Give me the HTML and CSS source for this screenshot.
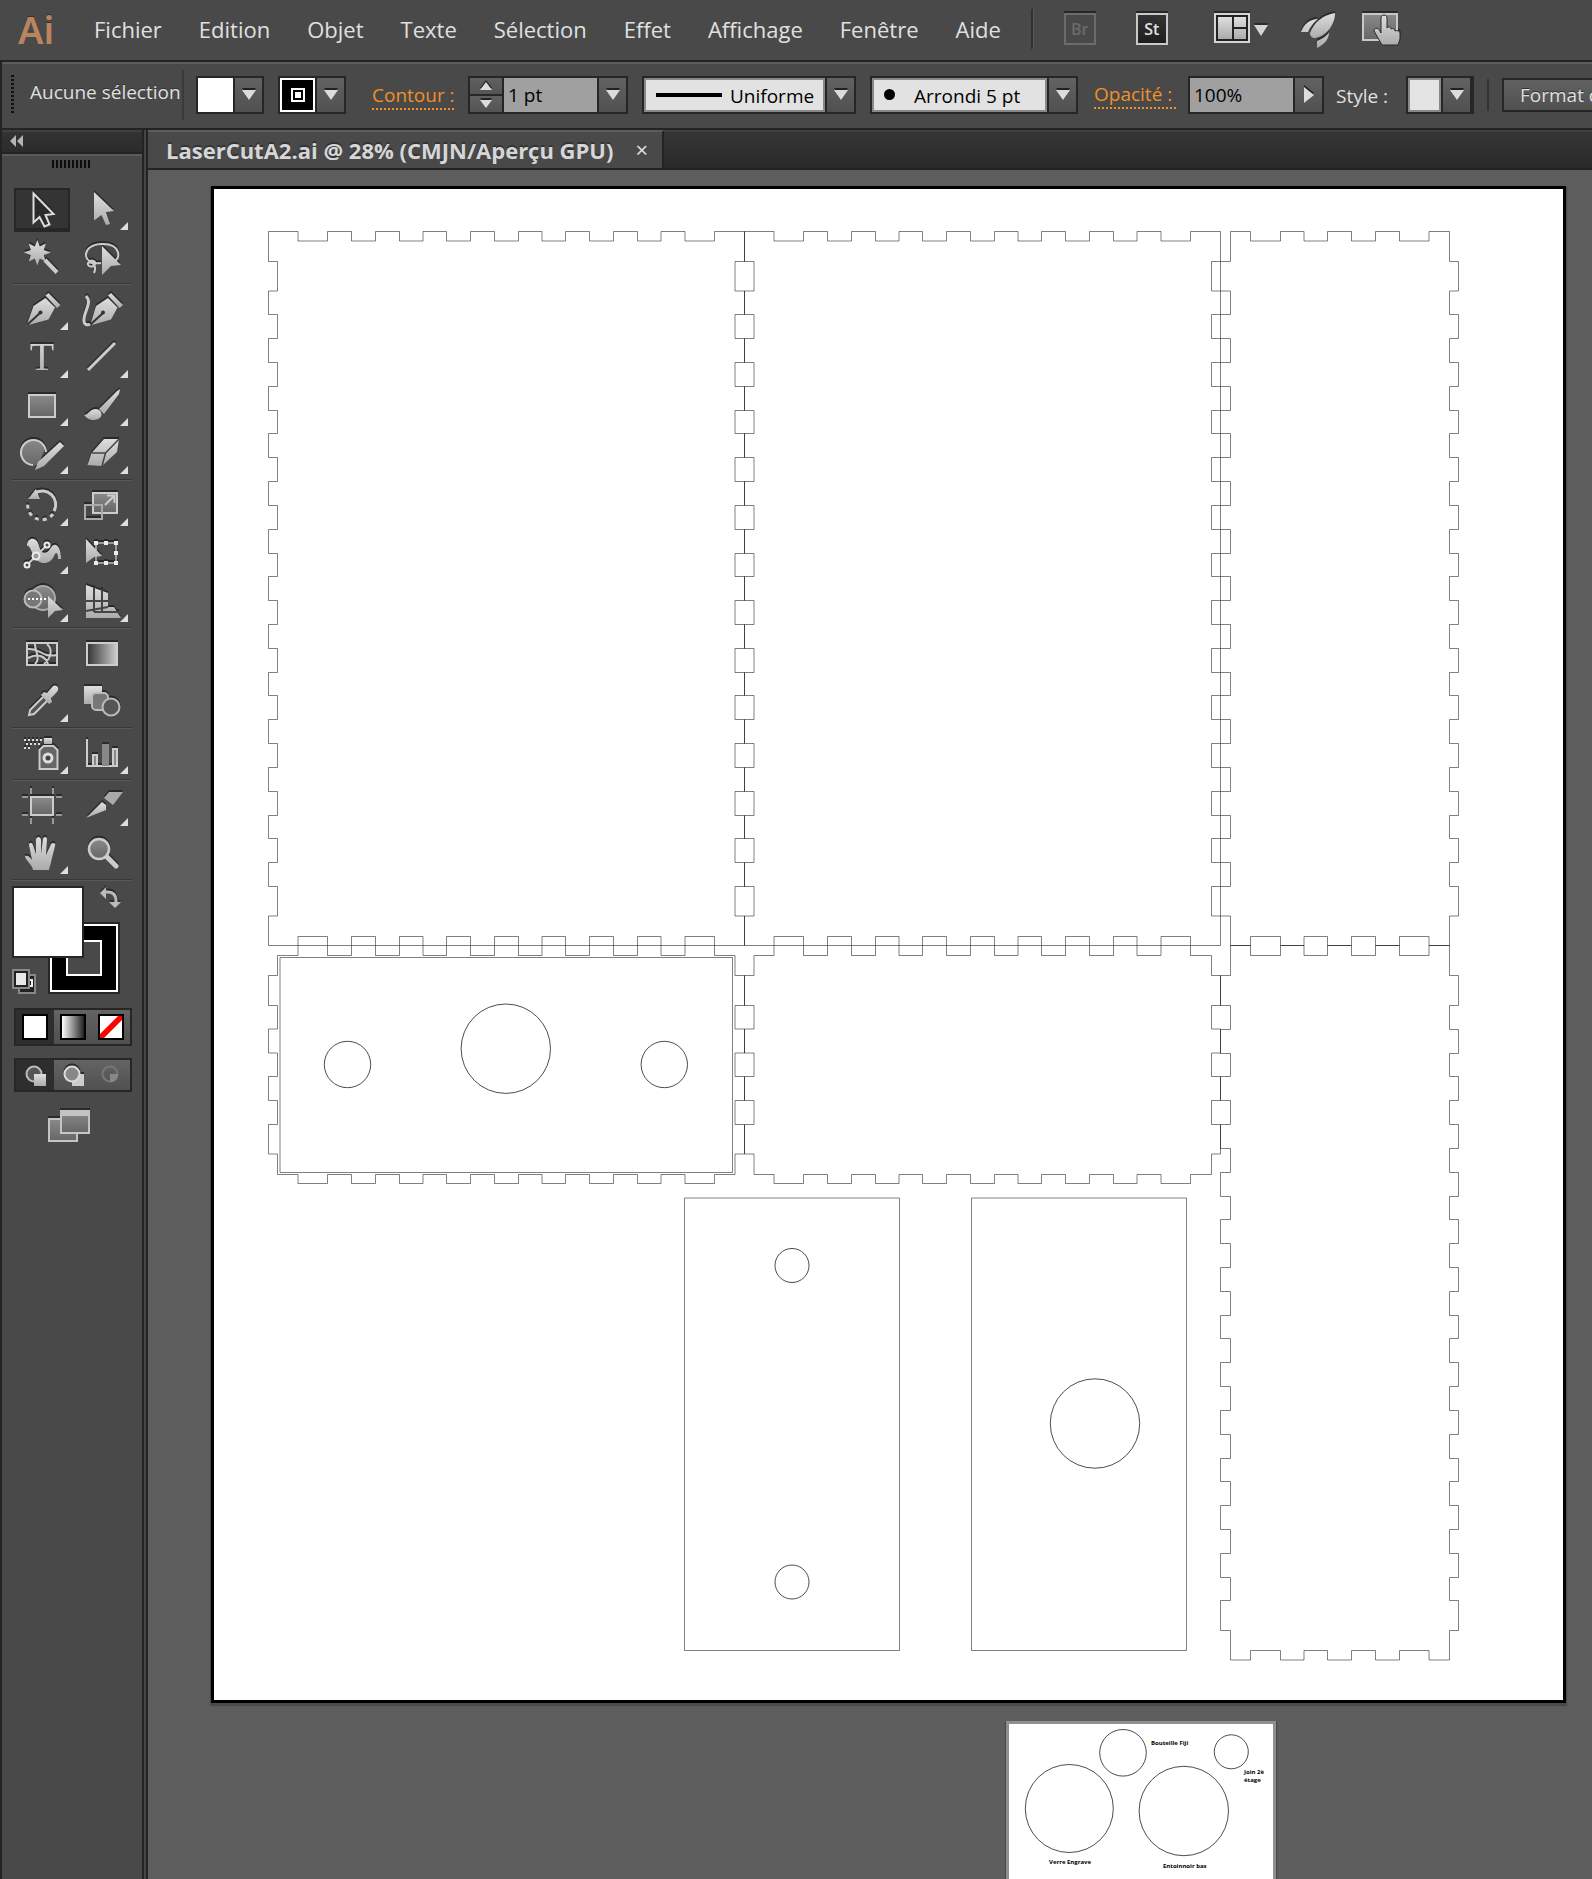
FILE: index.html
```html
<!DOCTYPE html>
<html lang="fr">
<head>
<meta charset="utf-8">
<meta name="viewport" content="width=device-width, initial-scale=1">
<title>LaserCutA2.ai</title>
<link rel="stylesheet" href="styles.css">
</head>
<body>
<svg class="defs" aria-hidden="true">
  <defs>
    <linearGradient id="metal" x1="0" y1="0" x2="0" y2="1"><stop offset="0" stop-color="#dedede"/><stop offset="1" stop-color="#ababab"/></linearGradient>
    <linearGradient id="dim" x1="0" y1="0" x2="0" y2="1"><stop offset="0" stop-color="#8a8a8a"/><stop offset="1" stop-color="#666"/></linearGradient>
    <linearGradient id="fade" x1="0" y1="0" x2="1" y2="0"><stop offset="0" stop-color="#333"/><stop offset="1" stop-color="#ccc"/></linearGradient>
    <linearGradient id="fade-out" x1="0" y1="0" x2="1" y2="0"><stop offset="0" stop-color="#fff"/><stop offset="1" stop-color="#222"/></linearGradient>
  </defs>
</svg>
<div class="app">
  <header class="menubar">
    <span class="logo">Ai</span>
    <nav class="menus">
      <button>Fichier</button><button>Edition</button><button>Objet</button><button>Texte</button><button>Sélection</button><button>Effet</button><button>Affichage</button><button>Fenêtre</button><button>Aide</button>
    </nav>
    <div class="apps">
      <button class="badge off">Br</button>
      <button class="badge">St</button>
      <button class="workspace-btn" aria-label="Réorganiser les documents">
        <svg class="ico" width="58" height="36" viewBox="0 0 58 36"><rect x="1" y="3" width="34" height="28" fill="#222" stroke="#d4d4d4" stroke-width="2"/><path d="M4 6h14v22H4zM20 6h12v10H20zM20 18h12v10H20z" fill="url(#metal)"/><path d="M40 14h14l-7 11z" fill="#d4d4d4"/></svg>
      </button>
      <button class="rocket" aria-label="Performances GPU">
        <svg class="ico" width="36" height="38" viewBox="0 0 36 38"><g fill="url(#metal)"><path d="M34 3C22 5 13 12 9 23c0 3 2 5 5 5C26 26 34 14 34 3z"/><path d="M17 9C9 9 3 14 0 22h7c2-5 5-9 10-13zM28 22c-2 4-6 6-12 9v7c8-4 12-9 12-16z"/></g></svg>
      </button>
      <button class="touch" aria-label="Espace de travail tactile">
        <svg class="ico" width="40" height="38" viewBox="0 0 40 38"><rect x="1" y="4" width="34" height="26" fill="url(#dim)" stroke="#c8c8c8" stroke-width="2"/><path d="M19 8c0-4 6-4 6 0v10c2-2 4-1 4 1 2-1 4 0 4 2 2-1 5 0 5 2v6l-2 6H20l-8-14c0-3 4-4 6 0l1 2z" fill="url(#metal)" stroke="#2b2b2b" stroke-width="1"/></svg>
      </button>
    </div>
  </header>

  <section class="control" aria-label="Contrôle">
    <span class="grip-v"></span>
    <span class="state">Aucune sélection</span>
    <button class="swatch fill-sw" aria-label="Fond"><i class="chip white"></i><i class="drop"></i></button>
    <button class="swatch stroke-sw" aria-label="Contour"><i class="chip ring"></i><i class="drop"></i></button>
    <label class="link contour" for="weight">Contour :</label>
    <span class="field weight">
      <span class="spin"><button class="up" aria-label="Augmenter"></button><button class="down" aria-label="Diminuer"></button></span>
      <input id="weight" type="text" value="1 pt">
      <button class="drop" aria-label="Épaisseurs"></button>
    </span>
    <span class="field profile">
      <select aria-label="Profil"><option>Uniforme</option></select><i class="stroke-line"></i><i class="drop"></i>
    </span>
    <span class="field brush">
      <select aria-label="Forme"><option>Arrondi 5 pt</option></select><i class="dot"></i><i class="drop"></i>
    </span>
    <label class="link opacite" for="opacity">Opacité :</label>
    <span class="field opacity"><input id="opacity" type="text" value="100%"><button class="drop right" aria-label="Régler l’opacité"></button></span>
    <span class="style-label">Style :</span>
    <button class="swatch style-sw" aria-label="Style"><i class="chip pale"></i><i class="drop"></i></button>
    <button class="format">Format de document</button>
  </section>

  <div class="main">
    <aside class="tools" aria-label="Outils">
      <div class="tools-head"><svg width="16" height="12" viewBox="0 0 16 12"><path d="M6 0v12L0 6zM13 0v12L7 6z" fill="#b5b5b5"/></svg></div>
      <div class="grip-h"></div>

      <div class="grid">
        <button class="tool on" aria-label="Sélection"><svg viewBox="0 0 60 48"><path d="M21.500 8.500L41.500 29l-8 1 4 9.500-5 2-5-9.500-6 5.500z" fill="#2a2a2a" stroke="#ddd" stroke-width="2"/></svg></button>
        <button class="tool more" aria-label="Sélection directe"><svg viewBox="0 0 60 48"><path d="M22 7l20 19-8 1 4 12-4 1-4.500-10-7.500 5.500z"/></svg></button>
        <button class="tool" aria-label="Baguette magique"><svg viewBox="0 0 60 48"><path d="M25.300 7l2.500 6.500 6-3-2 6.500 7 2.500-7 2.500 2 6.500-6-3-2.500 7-2.500-7-6 3 2-6.500-7-2.500 7-2.500-2-6.500 6 3z"/><path class="ln" d="M33 27l12 12.500" stroke-width="4"/></svg></button>
        <button class="tool" aria-label="Lasso"><svg viewBox="0 0 60 48"><path class="ln" d="M29 30C10 33 8 12 29 11c21-1 20 16 12 18M16 31c2-5 8-4 7 0s-8 3-7-1c5-2 9 3 6 10" stroke-width="2"/><path d="M30 13l19 19-10 1-9 9z"/></svg></button>
      </div>
      <hr>
      <div class="grid">
        <button class="tool more" aria-label="Plume"><svg viewBox="0 0 60 48"><path d="M14.500 40.500l7-19.500 12-8 9.500 9.500-6.500 12z"/><path d="M36.500 8l12 12-3.500 3-11.500-12.500z"/><path d="M15 40l13-12" stroke="#333" stroke-width="2"/><circle cx="28.500" cy="27.500" r="2" fill="#333"/></svg></button>
        <button class="tool" aria-label="Courbure"><svg viewBox="0 0 60 48"><path d="M18 40.500l6-19.500 12-8 9.500 9.500-6.500 12z"/><path d="M39 8l12 12-3.500 3L36 10.500z"/><path d="M18 40l13-12" stroke="#333" stroke-width="2"/><circle cx="31" cy="27.500" r="2" fill="#333"/><path class="ln" d="M14 11c7 7-3 16-2 25 0 3 3 5 6 3"/></svg></button>
        <button class="tool more" aria-label="Texte"><svg viewBox="0 0 60 48"><text x="30" y="37" text-anchor="middle" class="glyph-t">T</text></svg></button>
        <button class="tool more" aria-label="Trait"><svg viewBox="0 0 60 48"><path class="ln" d="M16 37L43 10"/></svg></button>
        <button class="tool more" aria-label="Rectangle"><svg viewBox="0 0 60 48"><rect x="17" y="14" width="26" height="22" class="bx"/></svg></button>
        <button class="tool more" aria-label="Pinceau"><svg viewBox="0 0 60 48"><path d="M48 8l-1 5-15 20-5-5 18-18z"/><path d="M12 34c5 0 5-6 12-6 7 1 7 8 2 10-5 2-10 1-14-4z"/></svg></button>
        <button class="tool more" aria-label="Crayon"><svg viewBox="0 0 60 48"><path d="M27 35a13 13 0 1 1 6-16z" fill="url(#dim)"/><path class="ln" d="M21 36A12.500 12.500 0 1 1 34 23" stroke-width="2"/><path d="M48 13l4 4-20 20-9 4 3-8z"/></svg></button>
        <button class="tool more" aria-label="Gomme"><svg viewBox="0 0 60 48"><path d="M15.500 36l4-12L32 10h15l-2 13-15 14z"/><path d="M19.500 24h14L47 10M33.500 24L30 37" fill="none" stroke="#444" stroke-width="1.500"/></svg></button>
      </div>
      <hr>
      <div class="grid">
        <button class="tool more" aria-label="Rotation"><svg viewBox="0 0 60 48"><path class="ln" d="M23 12a13.500 13.500 0 0 1 19 18"/><path class="ln" d="M41 33a14 14 0 0 1-25-11" stroke-dasharray="4 4"/><path d="M16 18l8-10 4 10z"/></svg></button>
        <button class="tool more" aria-label="Mise à l’échelle"><svg viewBox="0 0 60 48"><rect x="21" y="12" width="24" height="20" class="bx"/><rect x="13" y="24" width="17" height="14" fill="none" stroke="#aaa" stroke-width="2"/><path class="ln" d="M33 24l9-9M35 14.500h7.500V22" stroke-width="2"/></svg></button>
        <button class="tool more" aria-label="Largeur"><svg viewBox="0 0 60 48"><path d="M15 17c0-9 10-10 12 0 2 8 7 9 11 3 4-8 11-5 11 10h-3c0-7-2-8-4-3-4 10-17 9-21-1-3-9-5-10-6-9z"/><path class="ln" d="M15 36l20-20" stroke-width="2"/><g fill="#4a4a4a" stroke="#eee" stroke-width="2"><circle cx="15" cy="36" r="2.500"/><circle cx="35" cy="16" r="2.500"/><circle cx="24" cy="27" r="3.500" fill="#999"/></g></svg></button>
        <button class="tool" aria-label="Transformation manuelle"><svg viewBox="0 0 60 48"><rect x="24" y="14" width="20" height="20" fill="none" stroke="#999" stroke-width="2"/><path d="M22 12h4v4h-4zM32 12h4v4h-4zM42 12h4v4h-4zM42 22h4v4h-4zM42 32h4v4h-4zM32 32h4v4h-4zM22 32h4v4h-4z" fill="#eee"/><path d="M14 10l16 17-8 1-8 6z"/></svg></button>
        <button class="tool more" aria-label="Concepteur de forme"><svg viewBox="0 0 60 48"><circle cx="31" cy="21" r="12" fill="url(#dim)" stroke="#aaa" stroke-width="2"/><circle cx="21" cy="22" r="8.500" fill="#777" stroke="#bbb" stroke-width="2"/><path d="M16 22h20" stroke="#fff" stroke-width="2" stroke-dasharray="2 2"/><path d="M36 19l15 14-8 1-7 7z"/></svg></button>
        <button class="tool more" aria-label="Grille de perspective"><svg viewBox="0 0 60 48"><path d="M14 8l22 8v14h6l7 11H14z"/><path d="M22 10v25M30 12v22M14 24h22M14 34l22-4M22 35h25" stroke="#444" stroke-width="2" fill="none"/></svg></button>
      </div>
      <hr>
      <div class="grid">
        <button class="tool" aria-label="Filet"><svg viewBox="0 0 60 48"><rect x="15" y="14" width="30" height="22" fill="none" stroke="#ccc" stroke-width="2"/><path class="ln" d="M16 20c14-1 12 9 29 6M16 29c12-6 18 0 20 6M23 35c6-6 0-12 0-20M35 15c7 6 3 15-3 20" stroke-width="2"/></svg></button>
        <button class="tool" aria-label="Dégradé"><svg viewBox="0 0 60 48"><rect x="15" y="14" width="30" height="22" fill="url(#fade)" stroke="#ccc" stroke-width="2"/></svg></button>
        <button class="tool more" aria-label="Pipette"><svg viewBox="0 0 60 48"><path d="M31 20L18 33l-1 5 5-1 13-13" fill="#555" stroke="#ccc" stroke-width="2"/><path d="M29 18l3-3 3 1 6-7c4-2 7 2 4 6l-6 6 1 4-3 2z"/></svg></button>
        <button class="tool" aria-label="Dégradé de formes"><svg viewBox="0 0 60 48"><path d="M12 9h18v18H12z"/><rect x="20" y="16" width="16" height="17" rx="4" fill="#777" stroke="#bbb" stroke-width="2"/><circle cx="39" cy="30" r="8.500" fill="#555" stroke="#bbb" stroke-width="2"/></svg></button>
      </div>
      <hr>
      <div class="grid">
        <button class="tool more" aria-label="Pulvérisation"><svg viewBox="0 0 60 48"><path d="M32 9h8v6h-8z"/><path d="M27.500 40V21l4-4h10l4 4v19z" fill="#666" stroke="#ccc" stroke-width="2"/><circle cx="36" cy="29" r="4" fill="#444" stroke="#ddd" stroke-width="3"/><path d="M12 11h20M14 15h16M12 19h8" stroke="#ddd" stroke-width="2" stroke-dasharray="2 2"/></svg></button>
        <button class="tool more" aria-label="Graphique"><svg viewBox="0 0 60 48"><path class="ln" d="M15 10v27h31" stroke-width="2"/><path d="M21 36V26h4v10M41 36V20h4v16" fill="#888" stroke="#ccc" stroke-width="2"/><path d="M31 36V16h5v20z" fill="#888" stroke="#888" stroke-width="2"/></svg></button>
      </div>
      <hr>
      <div class="grid">
        <button class="tool" aria-label="Plan de travail"><svg viewBox="0 0 60 48"><path d="M10 16h6M44 16h6M10 34h6M44 34h6M19 7v6M41 7v6M19 37v6M41 37v6" stroke="#999" stroke-width="2"/><rect x="19" y="16" width="22" height="18" class="bx"/></svg></button>
        <button class="tool more" aria-label="Tranche"><svg viewBox="0 0 60 48"><path d="M14 37l16-16 4 3v5z"/><path d="M32 17l5-6h14L41 24z" fill="#aaa"/></svg></button>
        <button class="tool more" aria-label="Main"><svg viewBox="0 0 60 48"><path d="M21 41c-1-6-8-10-8-14 3-1 5 1 7 4l-3-15c0-3 3-3 4 0l3 9V11c0-4 5-4 5 0v14l2-15c1-3 4-2 4 0l-1 16 5-11c2-2 5-1 4 2l-4 16c0 3-2 5-2 8z"/></svg></button>
        <button class="tool" aria-label="Zoom"><svg viewBox="0 0 60 48"><path class="ln" d="M34 27l10 10" stroke-width="5" stroke-linecap="round"/><circle cx="27" cy="20" r="10" fill="url(#dim)" stroke="#ccc" stroke-width="2.500"/></svg></button>
      </div>
      <hr>
      <div class="colors">
        <svg width="122" height="122" viewBox="12 881 122 122">
          <path d="M48 922h72v72H48z" fill="#262626"/><path d="M50 924h68v68H50z" fill="#fff"/><path d="M52 926h64v64H52z"/><path d="M66 940h36v36H66z" fill="#fff"/><path d="M68 942h32v32H68z" fill="#494949"/>
          <path d="M12 886h72v72H12z" fill="#262626"/><path d="M14 888h68v68H14z" fill="#fff"/>
          <g class="ico"><path d="M103 892h5q8 0 8 9v2" fill="none" stroke="#bbb" stroke-width="3"/><path d="M106 887v12l-6-6zM109 902h12l-6 6z" fill="#bbb"/></g>
          <path d="M19 975h16v18H19z" fill="#222" stroke="#888" stroke-width="2"/><path d="M26 980h6v6h-8" fill="none" stroke="#eee" stroke-width="2"/><path d="M13 970h16v18H13z" fill="#222" stroke="#888" stroke-width="2"/><path d="M16 973h10v12H16z" fill="#e8e8e8"/>
        </svg>
      </div>
      <div class="seg">
        <button class="on" aria-label="Couleur"><svg width="26" height="26"><path d="M0 0h26v26H0z"/><path d="M2 2h22v22H2z" fill="#fff"/></svg></button>
        <button aria-label="Dégradé"><svg width="26" height="26"><path d="M0 0h26v26H0z"/><path d="M2 2h22v22H2z" fill="url(#fade-out)"/></svg></button>
        <button aria-label="Sans"><svg width="26" height="26"><path d="M0 0h26v26H0z"/><path d="M2 2h22v22H2z" fill="#fff"/><path d="M2 24v-4L20 2h4v4L6 24z" fill="#f00"/></svg></button>
      </div>
      <div class="seg modes">
        <button class="on" aria-label="Dessin normal"><svg class="ico" width="22" height="24"><circle cx="9" cy="11" r="7.500" fill="#555" stroke="#bbb" stroke-width="2"/><path d="M9 11h12v12H9z" fill="url(#metal)"/></svg></button>
        <button aria-label="Dessin arrière"><svg class="ico" width="22" height="24"><path d="M9 11h12v12H9z" fill="#ccc"/><circle cx="9" cy="11" r="7.500" fill="#888" stroke="#ddd" stroke-width="2"/></svg></button>
        <button aria-label="Dessin intérieur" disabled><svg width="22" height="24"><circle cx="9" cy="11" r="7.500" fill="none" stroke="#777" stroke-width="2"/><path d="M9 11h8q0 8-8 8z" fill="#888"/></svg></button>
      </div>
      <button class="screen" aria-label="Mode d’affichage"><svg class="ico" width="42" height="35"><path d="M1 11h28v22H1z" fill="url(#dim)" stroke="#c4c4c4" stroke-width="2"/><path d="M13 3h28v22H13z" fill="url(#dim)" stroke="#c4c4c4" stroke-width="2"/><path d="M13 2h28v6H13z" fill="#c4c4c4"/></svg></button>
    </aside>

    <div class="doc">
      <div class="tabs">
        <div class="tab"><span>LaserCutA2.ai @ 28% (CMJN/Aperçu GPU)</span><button aria-label="Fermer">×</button></div>
      </div>
      <div class="canvas">
        <div class="board board-main">
          <svg viewBox="214 189 1349 1511" role="img" aria-label="Plan de découpe laser">
            <path class="cut" id="panels"/>
            <g class="cut">
              <path d="M280 957.500h452.500v215H280zM684.500 1198h215v452.500h-215zM971.500 1198h215v452.500h-215z"/>
              <circle cx="347.500" cy="1064.500" r="23.200"/><circle cx="505.800" cy="1048.700" r="44.700"/><circle cx="664.300" cy="1064.500" r="23.200"/>
              <circle cx="792" cy="1265.500" r="17"/><circle cx="792" cy="1582" r="17"/><circle cx="1095" cy="1423.500" r="44.700"/>
            </g>
          </svg>
        </div>
        <div class="board board-side">
          <svg viewBox="1009 1724 264 155">
            <g class="cut"><circle cx="1123" cy="1752.800" r="23.300"/><circle cx="1231.300" cy="1751.800" r="17"/><circle cx="1069.300" cy="1808.500" r="44"/><circle cx="1183.800" cy="1811" r="44.700"/></g>
            <g class="note"><text x="1151" y="1745">Bouteille Fiji</text><text x="1244" y="1774">Join 2è</text><text x="1244" y="1782">étage</text><text x="1049" y="1864">Verre Engrave</text><text x="1163" y="1868">Entoinnoir bas</text></g>
          </svg>
        </div>
      </div>
    </div>
  </div>
</div>
<script src="script.js"></script>
</body>
</html>
```
FILE: styles.css
```css
* { box-sizing: border-box; }

body {
  margin: 0;
  background: #494949;
  color: #e0e0e0;
  font-family: "Open Sans", "Noto Sans", sans-serif;
  font-size: 19px;
}

button, input, select { font: inherit; color: inherit; border: 0; padding: 0; margin: 0; background: none; border-radius: 0; }
i { font-style: normal; }
.defs { position: absolute; width: 0; height: 0; }
.ico, .tool svg { filter: drop-shadow(0 -2px 0 #2a2a2a); }
.app { display: flex; flex-direction: column; min-height: 100vh; overflow: hidden; }

/* Menu bar */
.menubar { display: flex; align-items: center; height: 60px; padding: 0 0 2px 18px; white-space: nowrap; }
.logo { width: 76px; font-family: "Noto Sans", sans-serif; font-size: 38px; line-height: 52px; font-weight: 600; color: #b9855f; text-shadow: 0 -1px #333; }
.menus { display: flex; gap: 37px; text-shadow: 0 -2px #333; }
.menus button { font-size: 22px; line-height: 32px; }
.apps { display: flex; align-items: center; height: 40px; margin-left: 30px; padding-left: 31px; border-left: 2px solid #303030; box-shadow: inset 1px 0 #5a5a5a; }
.badge { width: 32px; height: 32px; margin-right: 40px; border: 2px solid #c8c8c8; background: linear-gradient(#333, #1e1e1e); font-size: 16px; line-height: 24px; font-weight: 600; box-shadow: 0 -2px #262626; }
.badge.off { border-color: #6b6b6b; background: none; color: #6b6b6b; }
.apps svg { display: block; }
.workspace-btn { margin: 0 29px 0 6px; }
.rocket { margin-right: 25px; }

/* Control bar */
.control { display: flex; align-items: center; height: 70px; padding: 0 0 1px 9px; border: solid #232323; border-width: 2px 0 2px 2px; box-shadow: inset 0 2px #5c5c5c; white-space: nowrap; overflow: hidden; }
.control > * { flex: none; }
.grip-v { width: 3px; height: 40px; background: repeating-linear-gradient(#111 0 2px, #494949 2px 4px); }
.state { width: 154px; height: 50px; margin: 0 12px 0 16px; line-height: 44px; border-right: 2px solid #3a3a3a; text-shadow: 0 -1px #333; }
.swatch, .field { display: flex; position: relative; height: 38px; border: 2px solid #262626; background: #262626; }
.swatch { width: 68px; gap: 2px; margin-right: 14px; }
.chip { width: 35px; height: 34px; }
.white { background: #fff; }
.pale { background: #e4e4e4; border: 2px solid #888; }
.ring { border: 2px solid #fff; background: linear-gradient(#fff, #fff) center / 6px 6px no-repeat, linear-gradient(#000, #000) center / 10px 10px no-repeat, linear-gradient(#fff, #fff) center / 14px 14px no-repeat, #000; }
.drop { display: flex; align-items: center; justify-content: center; width: 27px; height: 34px; background: linear-gradient(#626262, #505050); }
.drop::before, .up::before, .down::before { content: ""; border: 7px solid transparent; border-top: 10px solid #dcdcdc; border-bottom: 0; filter: drop-shadow(0 -2px 0 #222); }
.drop.right::before { border: 8px solid transparent; border-left: 10px solid #dcdcdc; border-right: 0; }
.link { line-height: 26px; color: #ef9029; border-bottom: 2px dotted #ef9029; }
.contour { width: 82px; margin: 2px 14px 0 12px; }
.field { gap: 2px; margin-right: 14px; }
.field input { min-width: 0; flex: 1; padding-left: 4px; background: #a0a0a0; color: #000; }
.spin { display: flex; flex-direction: column; gap: 2px; width: 32px; }
.spin button { display: flex; flex: 1; align-items: center; justify-content: center; background: linear-gradient(#606060, #545454); }
.up::before { border: 6px solid transparent; border-top: 0; border-bottom: 8px solid #dcdcdc; }
.down::before { border-width: 8px 6px 0; }
.weight { width: 160px; }
.profile { width: 214px; }
.brush { width: 208px; }
.field select { flex: 1; appearance: none; padding-top: 2px; border: 2px solid #888; background: #e2e2e2; color: #000; }
.profile select { padding-left: 84px; }
.brush select { padding-left: 40px; }
.stroke-line { position: absolute; left: 12px; top: 15px; width: 66px; height: 4px; background: #000; }
.dot { position: absolute; left: 12px; top: 11px; width: 11px; height: 11px; border-radius: 50%; background: #000; }
.opacite { width: 82px; margin: 0 12px 0 2px; }
.opacity { width: 136px; margin-right: 12px; }
.style-label { width: 56px; margin-right: 14px; padding-top: 2px; }
.style-sw .chip { width: 33px; }
.format { height: 34px; margin-left: 14px; padding: 0 16px; border: 2px solid #262626; background: linear-gradient(#626262, #505050); box-shadow: -14px 0 0 -1px #494949, -16px 0 0 -1px #333; text-shadow: 0 -1px #333; }

/* Tool panel */
.main { display: flex; flex: 1; }
.tools { flex: none; width: 148px; border: solid #232323; border-width: 0 6px 0 2px; border-image: linear-gradient(90deg, #232323 2px, #232323 142px, #232323 144px, #454545 144px, #454545 146px, #232323 146px) 0 6 0 2; }
.tools-head { display: flex; align-items: center; height: 24px; padding-left: 8px; background: linear-gradient(#404040 2px, #333 2px, #2b2b2b); border-bottom: 2px solid #232323; }
.grip-h { height: 31px; border-top: 2px solid #5a5a5a; background: repeating-linear-gradient(90deg, #0c0c0c 0 2px, #494949 2px 4px) 50px 4px / 38px 8px no-repeat; }
.grid { display: grid; grid-template-columns: 60px 60px; padding-left: 10px; }
.tool { position: relative; height: 48px; }
.tool svg { display: block; width: 60px; height: 48px; fill: url(#metal); }
.tool.on { background: linear-gradient(#343434, #343434) 4px 5px / 52px 38px no-repeat, linear-gradient(#262626, #262626) 2px 3px / 56px 44px no-repeat; }
.tool.more::after { content: ""; position: absolute; right: 4px; bottom: 3px; border: 4px solid #dedede; border-left-color: transparent; border-top-color: transparent; }
.ln { fill: none; stroke: #ccc; stroke-width: 3px; }
.ln[stroke-width="2"] { stroke-width: 2px; }
.ln[stroke-width="4"] { stroke-width: 4px; }
.ln[stroke-width="5"] { stroke-width: 5px; }
.bx { fill: url(#dim); stroke: #ccc; stroke-width: 2px; }
.glyph-t { font-family: "Liberation Serif", serif; font-size: 40px; }
hr { width: 120px; height: 4px; margin: 0 10px; border: 0; background: linear-gradient(transparent 2px, #363636 2px, #363636 3px, #595959 3px); }
.colors { height: 127px; padding-left: 10px; }
.colors svg { display: block; }
.seg { display: flex; width: 118px; height: 38px; margin: 0 0 12px 12px; padding: 2px; background: #262626; }
.seg button { display: flex; flex: 1; align-items: center; justify-content: center; background: linear-gradient(#646464, #505050); }
.seg .on { background: #2e2e2e; }
.modes { height: 34px; }
.modes svg { margin-left: 2px; }
.screen { display: block; margin: 16px 0 0 46px; }

/* Document */
.doc { display: flex; flex: 1; flex-direction: column; min-width: 0; }
.tabs { display: flex; height: 40px; border-bottom: 2px solid #232323; background: linear-gradient(#404040 2px, #353535 2px, #2a2a2a); }
.tab { display: flex; align-items: center; gap: 22px; height: 38px; padding: 0 14px 0 18px; border-top: 2px solid #5c5c5c; border-right: 2px solid #232323; background: #494949; white-space: nowrap; }
.tab span { font-size: 22px; line-height: 34px; font-weight: 700; color: #d6d6d6; text-shadow: 0 -2px #333; }
.tab button { font-size: 22px; line-height: 28px; padding-bottom: 2px; }
.canvas { position: relative; flex: 1; min-height: 1709px; background: #5d5d5d; overflow: hidden; }
.board { position: absolute; border: 3px solid #000; background: #fff; box-shadow: 0 2px 1px 1px #4a4a4a; }
.board svg { display: block; width: 100%; }
.board-main { left: 63px; top: 16px; width: 1355px; }
.board-side { left: 858px; top: 1551px; width: 270px; height: 190px; border-color: #8f8f8f; }
.cut { fill: none; stroke: #000; stroke-width: 0.5px; }
.cut circle { stroke-width: 0.7px; }
.note { font-family: "Open Sans", sans-serif; font-size: 6px; font-weight: 700; }
```
FILE: script.js
```js
// Cut lines of the finger-jointed box panels, in canvas pixels.
const longEdge = [298, 327.5, 351.5, 375.5, 399.5, 423, 446.5, 470.5, 494.5, 518.5, 542, 565.5, 589.5, 613.5, 637.5, 661, 685, 714.5];
const shortEdge = [1250.5, 1280.5, 1304, 1327.5, 1351.5, 1375.5, 1399.5, 1429];
const sideEdge = [975.5, 1005.5, 1029, 1053, 1076.5, 1100.5, 1124.5, 1154];

// A wide first and last finger, with regular ones between them.
function fingers(first, start, end, last) {
  const marks = [first, start];
  for (let k = 1; k < 25; k++) marks.push(Math.floor(start + k * 23.82) + 0.5);
  return marks.concat(end, last);
}
const tallEdge = fingers(261.5, 291, 886.5, 916);
const tallEdgeLow = fingers(975.5, 1005.5, 1600.5, 1630.5);
const shifted = longEdge.map((x) => x + 476);

// base and alt are [left, top, right, bottom]; alt holds where the fingers or notches reach.
function panel(base, alt, xs, ys) {
  const [l, t, r, b] = base;
  const [al, at, ar, ab] = alt;
  const walkX = (list, from, to) => list.map((x, i) => `H${x}V${i % 2 ? from : to}`).join("");
  const walkY = (list, from, to) => list.map((y, i) => `V${y}H${i % 2 ? from : to}`).join("");
  const back = (list) => list.slice().reverse();
  return `M${l} ${t}` + walkX(xs, t, at) + `H${r}` + walkY(ys, r, ar) + `V${b}` +
    walkX(back(xs), b, ab) + `H${l}` + walkY(back(ys), l, al) + "Z";
}

// One path for all panels, so that an edge shared by two of them is drawn once.
document.getElementById("panels").setAttribute("d", [
  panel([268.5, 231.5, 744.5, 945.5], [277.5, 241, 735, 936.5], longEdge, tallEdge),
  panel([744.5, 231.5, 1220.5, 945.5], [754, 241, 1211.5, 936.5], shifted, tallEdge),
  panel([1230.5, 231.5, 1449.5, 945.5], [1220.5, 241, 1458.5, 936.5], shortEdge, tallEdge),
  panel([277.5, 955.5, 735, 1174.5], [268.5, 945.5, 744.5, 1183.5], longEdge, sideEdge),
  panel([754, 955.5, 1211.5, 1174.5], [744.5, 945.5, 1220.5, 1183.5], shifted, sideEdge),
  panel([1230.5, 945.5, 1449.5, 1660], [1220.5, 955.5, 1458.5, 1650.5], shortEdge, tallEdgeLow),
].join(""));
```
